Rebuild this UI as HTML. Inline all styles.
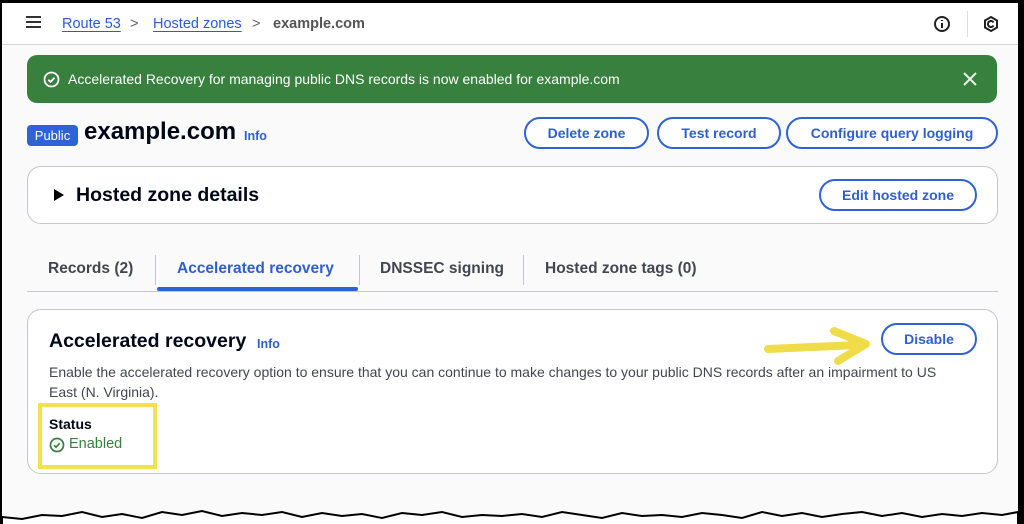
<!DOCTYPE html>
<html><head><style>
*{box-sizing:border-box;margin:0;padding:0}
body{width:1024px;height:524px;overflow:hidden;background:#000;font-family:"Liberation Sans",sans-serif;color:#000716;position:relative}
#page{position:absolute;left:2px;top:3px;width:1016px;height:521px;background:#fafafa;overflow:hidden}
.hdr{position:absolute;left:0;top:0;width:1016px;height:42px;background:#fff;border-bottom:1px solid #d5d5d5}
.bc{position:absolute;top:13px;font-size:14.5px}
.bc a{color:#2a5bd4;text-decoration:underline;text-underline-offset:3px}
.banner{position:absolute;left:25px;top:52px;width:970px;height:48px;background:#37803e;border-radius:10px;color:#fff;font-size:14px}
.btn{position:absolute;height:32px;border:2px solid #2f62d6;border-radius:18px;background:#fff;color:#2f5fcf;font-weight:bold;font-size:14px;text-align:center;line-height:28px}
.card{position:absolute;background:#fff;border:1px solid #c6c6cd;border-radius:14px}
.tab{position:absolute;top:257px;font-size:15.5px;font-weight:bold;color:#424650}
.sep{position:absolute;top:252px;width:1px;height:30px;background:#c6c6cd}
</style></head><body>
<div id="page">
 <div class="hdr">
  <div style="position:absolute;left:24px;top:13px;width:15px;height:2px;background:#333;box-shadow:0 5px 0 #333,0 10px 0 #333"></div>
  <div class="bc" style="left:60px"><a>Route 53</a></div>
  <div class="bc" style="left:128px;color:#666">&gt;</div>
  <div class="bc" style="left:151px"><a>Hosted zones</a></div>
  <div class="bc" style="left:250px;color:#666">&gt;</div>
  <div class="bc" style="left:271px;color:#555;font-weight:bold">example.com</div>
  <svg style="position:absolute;left:931px;top:12px" width="18" height="18" viewBox="0 0 18 18"><circle cx="9" cy="9" r="7" fill="none" stroke="#222" stroke-width="2"/><path d="M9 8v5M9 5v1" stroke="#222" stroke-width="2"/></svg>
  <div style="position:absolute;left:965px;top:8px;width:1px;height:26px;background:#ddd"></div>
  <svg style="position:absolute;left:980px;top:12px" width="18" height="18" viewBox="0 0 18 18"><path d="M9 2l6 3.5v7L9 16l-6-3.5v-7z" fill="none" stroke="#222" stroke-width="2"/><path d="M11.5 7.5A3 3 0 1 0 11.5 10.5" fill="none" stroke="#222" stroke-width="2"/></svg>
 </div>
 <div class="banner">
  <svg style="position:absolute;left:16px;top:16px" width="17" height="17" viewBox="0 0 17 17"><circle cx="8.5" cy="8.5" r="7" fill="none" stroke="#fff" stroke-width="1.8"/><path d="M5.3 8.8l2.2 2.2 4-4.3" fill="none" stroke="#fff" stroke-width="1.8"/></svg>
  <div style="position:absolute;left:41px;top:16px">Accelerated Recovery for managing public DNS records is now enabled for example.com</div>
  <svg style="position:absolute;left:936px;top:17px" width="14" height="14" viewBox="0 0 14 14"><path d="M1 1l12 12M13 1L1 13" stroke="#e8f0e8" stroke-width="2"/></svg>
 </div>
 <div style="position:absolute;left:25px;top:122px;width:51px;height:21px;background:#2f62d6;border-radius:4px;color:#fff;font-size:13px;text-align:center;line-height:21px">Public</div>
 <div style="position:absolute;left:82px;top:115px;font-size:24px;font-weight:bold">example.com</div>
 <div style="position:absolute;left:242px;top:126px;font-size:12.5px;font-weight:bold;color:#2f5fcf">Info</div>
 <div class="btn" style="left:522px;top:114px;width:125px">Delete zone</div>
 <div class="btn" style="left:655px;top:114px;width:124px">Test record</div>
 <div class="btn" style="left:784px;top:114px;width:212px">Configure query logging</div>
 <div class="card" style="left:25px;top:163px;width:971px;height:58px">
  <svg style="position:absolute;left:25px;top:21px" width="12" height="14"><path d="M1 1l10 6-10 6z" fill="#000"/></svg>
  <div style="position:absolute;left:48px;top:17px;font-size:19.5px;font-weight:bold">Hosted zone details</div>
  <div class="btn" style="left:791px;top:12px;width:158px">Edit hosted zone</div>
 </div>
 <div class="tab" style="left:46px">Records (2)</div>
 <div class="sep" style="left:153px"></div>
 <div class="tab" style="left:175px;color:#2f5fcf">Accelerated recovery</div>
 <div style="position:absolute;left:155px;top:284px;width:201px;height:4px;background:#2f62d6;border-radius:2px"></div>
 <div class="sep" style="left:357px"></div>
 <div class="tab" style="left:378px">DNSSEC signing</div>
 <div class="sep" style="left:521px"></div>
 <div class="tab" style="left:543px">Hosted zone tags (0)</div>
 <div style="position:absolute;left:25px;top:288px;width:971px;height:1px;background:#c6c6cd"></div>
 <div class="card" style="left:25px;top:306px;width:971px;height:165px">
  <div style="position:absolute;left:21px;top:20px;font-size:19.5px;font-weight:bold">Accelerated recovery</div>
  <div style="position:absolute;left:229px;top:27px;font-size:12.5px;font-weight:bold;color:#2f5fcf">Info</div>
  <div class="btn" style="left:853px;top:13px;width:96px">Disable</div>
  <div style="position:absolute;left:21px;top:52px;width:900px;font-size:14px;line-height:20px;color:#424650">Enable the accelerated recovery option to ensure that you can continue to make changes to your public DNS records after an impairment to US East (N. Virginia).</div>
  <div style="position:absolute;left:21px;top:106px;font-size:14px;font-weight:bold">Status</div>
  <svg style="position:absolute;left:21px;top:127px" width="16" height="16" viewBox="0 0 16 16"><circle cx="8" cy="8" r="6.5" fill="none" stroke="#37803e" stroke-width="1.7"/><path d="M5 8.2l2 2 3.8-4" fill="none" stroke="#37803e" stroke-width="1.7"/></svg>
  <div style="position:absolute;left:41px;top:126px;font-size:14.5px;color:#37803e">Enabled</div>
 </div>
 <div style="position:absolute;left:36px;top:400px;width:119px;height:66px;border:4px solid #f3e24e"></div>
 <svg style="position:absolute;left:760px;top:322px" width="112" height="40" viewBox="0 0 112 40"><path d="M6 24L95 20" stroke="#f0dc48" stroke-width="8" stroke-linecap="round"/><path d="M72 6L104 19 76 36" fill="none" stroke="#f0dc48" stroke-width="8" stroke-linecap="round" stroke-linejoin="round"/></svg>
 <svg style="position:absolute;left:0;top:500px" width="1016" height="24" viewBox="0 0 1016 24"><path d="M0 14 L20 16 40 12 60 13 80 9 100 14 120 11 140 15 160 9 180 12 200 8 220 13 240 10 260 12 280 9 300 14 320 10 340 13 360 11 380 15 400 10 420 12 440 9 460 14 480 12 500 13 520 11 540 14 560 9 580 12 600 15 620 10 640 13 660 12 680 14 700 10 720 12 740 15 760 9 780 13 800 10 820 14 840 11 860 9 880 13 900 10 920 14 940 11 960 13 980 10 1000 12 1016 9 L1016 24 L0 24Z" fill="#fff" stroke="#000" stroke-width="2"/></svg>
</div>
</body></html>
